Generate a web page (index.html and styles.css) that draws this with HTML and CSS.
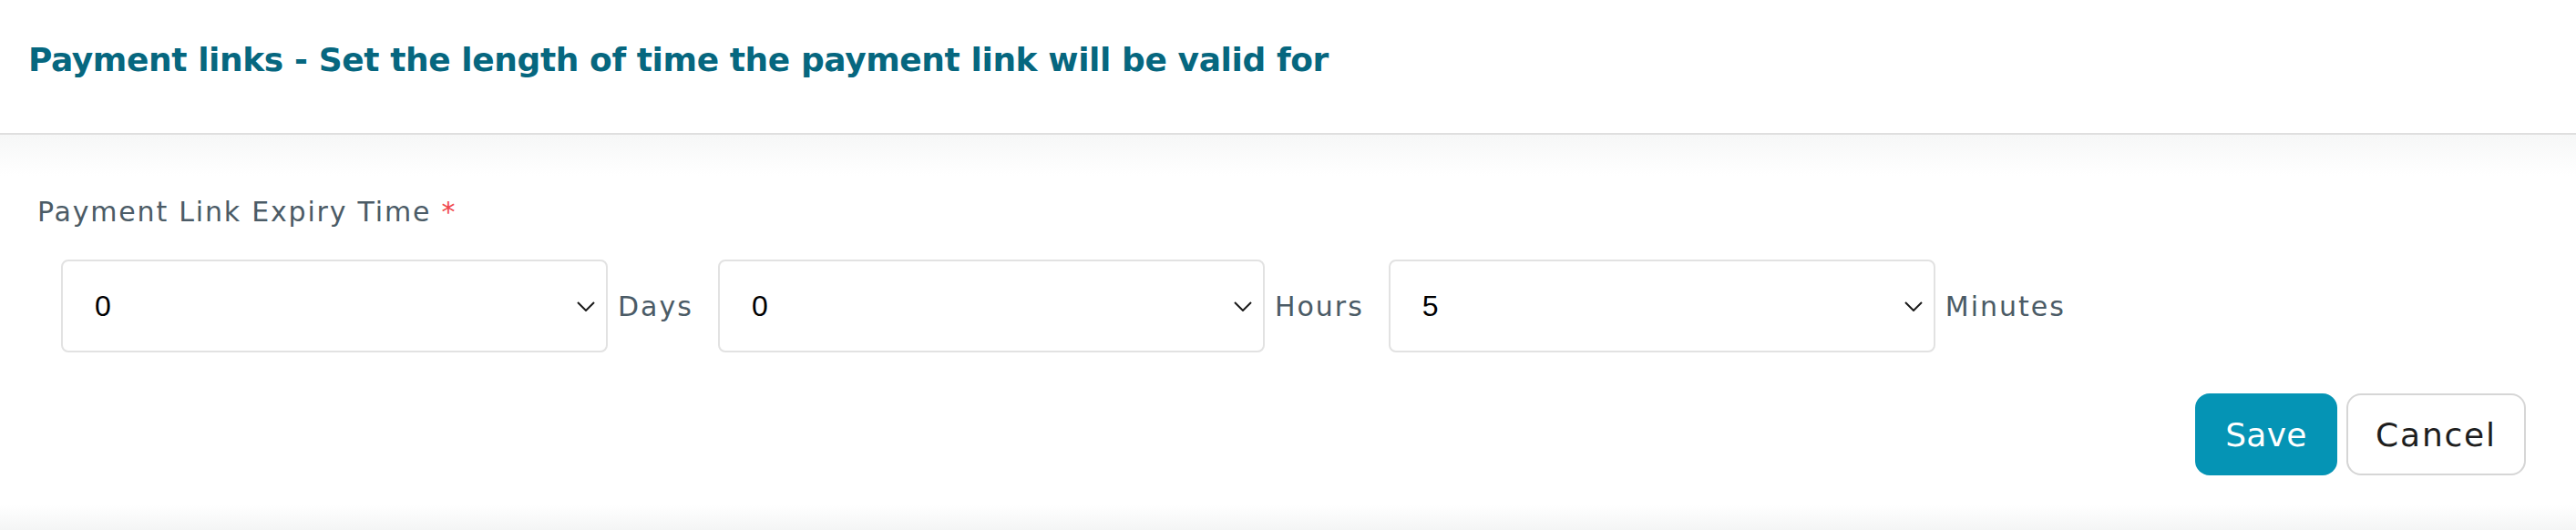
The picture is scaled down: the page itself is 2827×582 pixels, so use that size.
FILE: index.html
```html
<!DOCTYPE html>
<html lang="en">
<head>
    <meta charset="UTF-8">
    <meta name="viewport" content="width=device-width, initial-scale=1">
    <title>Payment links</title>
    <link rel="stylesheet" href="styles.css">
</head>
<body>
    <div class="header">
        <h1 class="title">Payment links - Set the length of time the payment link will be valid for</h1>
    </div>
    <div class="content">
        <label class="field-label" for="days">Payment Link Expiry Time <span class="req">*</span></label>
        <div class="expiry-row">
            <div class="time-part">
                <div class="select-wrap">
                    <select id="days" class="time-select">
                        <option selected>0</option>
                        <option>1</option>
                        <option>2</option>
                    </select>
                    <svg class="chev" width="20" height="11" viewBox="0 0 20 11"><path d="M1 1l9 9 9-9" fill="none" stroke="#1a1a1a" stroke-width="2"/></svg>
                </div>
                <span class="unit">Days</span>
            </div>
            <div class="time-part">
                <div class="select-wrap">
                    <select id="hours" class="time-select">
                        <option selected>0</option>
                        <option>1</option>
                        <option>2</option>
                    </select>
                    <svg class="chev" width="20" height="11" viewBox="0 0 20 11"><path d="M1 1l9 9 9-9" fill="none" stroke="#1a1a1a" stroke-width="2"/></svg>
                </div>
                <span class="unit">Hours</span>
            </div>
            <div class="time-part">
                <div class="select-wrap">
                    <select id="minutes" class="time-select">
                        <option>0</option>
                        <option selected>5</option>
                        <option>10</option>
                    </select>
                    <svg class="chev" width="20" height="11" viewBox="0 0 20 11"><path d="M1 1l9 9 9-9" fill="none" stroke="#1a1a1a" stroke-width="2"/></svg>
                </div>
                <span class="unit">Minutes</span>
            </div>
        </div>
        <div class="actions">
            <button type="button" class="btn btn-save">Save</button>
            <button type="button" class="btn btn-cancel">Cancel</button>
        </div>
    </div>
</body>
</html>
```

FILE: styles.css
```css
body {
    margin: 0;
    padding: 0;
    font-family: "DejaVu Sans", Inter, sans-serif;
    background-color: #fff;
}

.header {
    border-bottom: 2px solid #dfdfdf;
    padding: 44px 31px 58px;
}

.title {
    margin: 0;
    font-size: 36px;
    line-height: 44px;
    font-weight: 700;
    color: #06677f;
    letter-spacing: -0.4px;
}

.content {
    padding: 67px 55px 60px 41px;
    background: linear-gradient(to bottom, #f6f7f7 0, #fff 45px, #fff calc(100% - 28px), #f4f5f5 100%);
}

.field-label {
    display: block;
    font-size: 30px;
    line-height: 36px;
    color: #4b5b66;
    letter-spacing: 1.8px;
}

.req {
    color: #f0484e;
}

.expiry-row {
    display: flex;
    align-items: center;
    gap: 27px;
    margin-top: 34px;
    padding-left: 26px;
}

.time-part {
    display: flex;
    align-items: center;
    gap: 11px;
}

.select-wrap {
    position: relative;
}

.time-select {
    appearance: none;
    -webkit-appearance: none;
    width: 600px;
    height: 102px;
    border: 2px solid #e2e2e2;
    border-radius: 8px;
    background-color: #fff;
    padding: 0 40px 0 35px;
    font-family: "Liberation Sans", Arial, sans-serif;
    font-size: 32px;
    color: #000;
    outline: none;
}

.chev {
    position: absolute;
    right: 14px;
    top: 46px;
    pointer-events: none;
}

.unit {
    font-size: 30px;
    color: #4b5b66;
    letter-spacing: 2px;
}

.actions {
    display: flex;
    justify-content: flex-end;
    gap: 10px;
    margin-top: 45px;
}

.btn {
    height: 90px;
    border-radius: 16px;
    font-family: "DejaVu Sans", Inter, sans-serif;
    font-size: 36px;
    cursor: pointer;
}

.btn-save {
    width: 156px;
    border: none;
    background-color: #0594b5;
    color: #fff;
    letter-spacing: 0.3px;
}

.btn-cancel {
    width: 197px;
    border: 2px solid #d6d6d6;
    background-color: #fff;
    color: #1e1e1e;
    letter-spacing: 1.8px;
}
```
